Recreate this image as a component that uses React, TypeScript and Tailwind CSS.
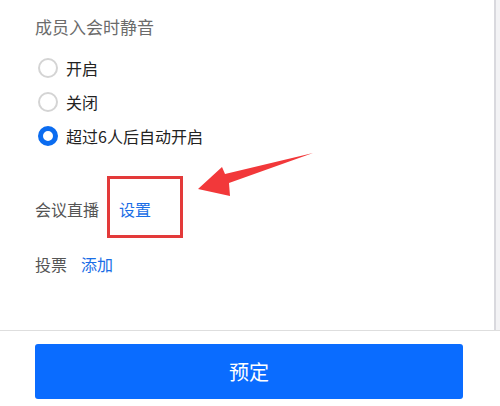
import React from "react";

const font = { fontFamily: '"Noto Sans CJK SC", "Noto Sans", sans-serif' };

function Radio({ checked, label }: { checked?: boolean; label: string }) {
  return (
    <div className="flex h-[34px] items-center">
      <div className="ml-[3px] flex h-[20px] w-[20px] items-center justify-center">
        {checked ? (
          <div className="h-[20px] w-[20px] rounded-full border-[5px] border-[#0b6cf0] bg-white" />
        ) : (
          <div className="h-[20px] w-[20px] rounded-full border-[2px] border-[#d4d4d4] bg-white" />
        )}
      </div>
      <span className="ml-[8px] text-[16px] leading-[24px] text-[#222]">{label}</span>
    </div>
  );
}

export default function App() {
  return (
    <div className="relative h-[406px] w-[500px] overflow-hidden bg-white" style={font}>
      <div className="flex h-[331px] w-[500px] border-b border-[#dedede]">
        <div className="flex flex-1 flex-col pl-[35px] pt-[15px]">
          <div className="text-[17px] leading-[24px] text-[#6b6b6b]">成员入会时静音</div>
          <div className="mt-[12px] flex flex-col">
            <Radio label="开启" />
            <Radio label="关闭" />
            <Radio checked label="超过6人后自动开启" />
          </div>
          <div className="mt-[44px] flex items-center text-[16px] leading-[24px]">
            <span className="text-[#555]">会议直播</span>
            <span className="ml-[20px] text-[#1a6ee6]">设置</span>
          </div>
          <div className="mt-[31px] flex items-center text-[16px] leading-[24px]">
            <span className="text-[#555]">投票</span>
            <span className="ml-[14px] text-[#1a6ee6]">添加</span>
          </div>
        </div>
        <div className="h-full w-[6px] border-l-2 border-[#d9d9de] bg-[#f3f3f5]" />
      </div>
      <div className="flex justify-center">
        <button className="mt-[13px] ml-[-2px] flex h-[55px] w-[428px] items-center justify-center rounded-[3px] bg-[#0a6cff] text-[20px] text-white">
          预定
        </button>
      </div>

      <div className="absolute left-[107px] top-[176px] h-[62px] w-[76px] border-[3px] border-[#e33a3a]" />
      <svg className="absolute left-0 top-0" width="500" height="406" viewBox="0 0 500 406">
        <polygon
          points="198,189 222,167 225,174 313,153 229,183 230,196"
          fill="#f2383a"
        />
      </svg>
    </div>
  );
}
